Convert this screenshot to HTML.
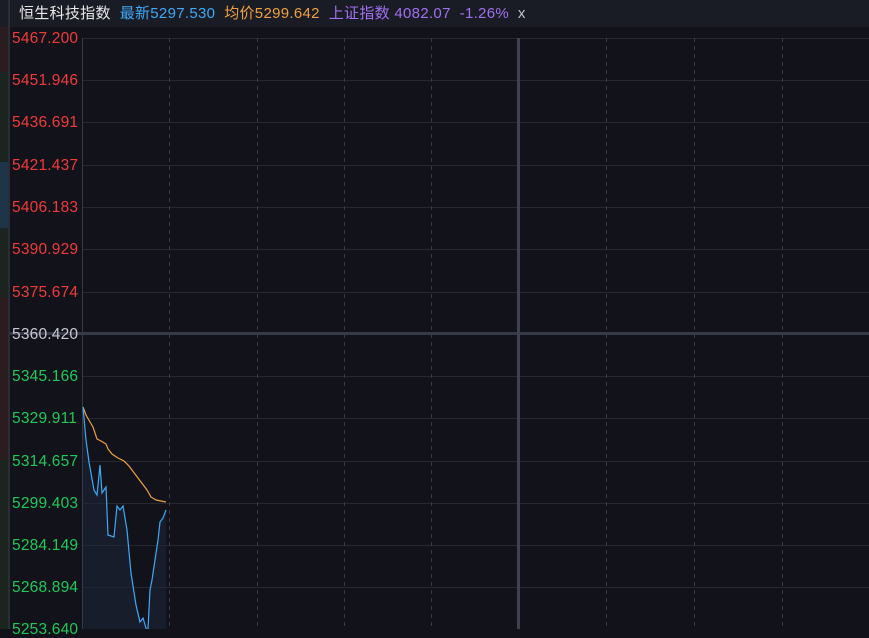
<!DOCTYPE html>
<html><head><meta charset="utf-8"><style>
html,body{margin:0;padding:0;width:869px;height:629px;overflow:hidden;background:#12131a;font-family:"Liberation Sans","Noto Sans CJK SC",sans-serif;}
.hdr{position:absolute;left:10px;top:0;width:859px;height:27px;background:#1a1c25;font-size:15px;line-height:27px;white-space:pre;letter-spacing:0.3px;}
.lbl{position:absolute;left:12px;font-size:15.5px;line-height:16px;letter-spacing:0.2px;}
</style></head><body>
<div style="position:absolute;left:0;top:0;width:9px;height:629px;background:#1b1d26"></div>
<div style="position:absolute;left:0;top:27px;width:8px;height:45px;background:#2a1c1f"></div>
<div style="position:absolute;left:0;top:72px;width:8px;height:90px;background:#1b241f"></div>
<div style="position:absolute;left:0;top:162px;width:8px;height:66px;background:#1e3448"></div>
<div style="position:absolute;left:0;top:228px;width:8px;height:70px;background:#1b241f"></div>
<div style="position:absolute;left:0;top:298px;width:8px;height:162px;background:#2a1c1f"></div>
<div style="position:absolute;left:0;top:460px;width:8px;height:169px;background:#1b241f"></div>
<div style="position:absolute;left:8px;top:0;width:2px;height:629px;background:#2a2d38"></div>
<div class="hdr">  <span style="color:#e8e8e8">恒生科技指数</span>  <span style="color:#3fa9f5">最新5297.530</span>  <span style="color:#f0a040">均价5299.642</span>  <span style="color:#a070f0">上证指数 4082.07  -1.26%</span>  <span style="color:#c0c0c8">x</span></div>
<svg style="position:absolute;left:0;top:0" width="869" height="629">
<g stroke="#262834" stroke-width="1">
<line x1="82" y1="38.5" x2="869" y2="38.5"/><line x1="82" y1="80.5" x2="869" y2="80.5"/><line x1="82" y1="122.5" x2="869" y2="122.5"/><line x1="82" y1="165.5" x2="869" y2="165.5"/><line x1="82" y1="207.5" x2="869" y2="207.5"/><line x1="82" y1="249.5" x2="869" y2="249.5"/><line x1="82" y1="292.5" x2="869" y2="292.5"/><line x1="82" y1="376.5" x2="869" y2="376.5"/><line x1="82" y1="418.5" x2="869" y2="418.5"/><line x1="82" y1="461.5" x2="869" y2="461.5"/><line x1="82" y1="503.5" x2="869" y2="503.5"/><line x1="82" y1="545.5" x2="869" y2="545.5"/><line x1="82" y1="587.5" x2="869" y2="587.5"/>
</g>
<line x1="10" y1="333.5" x2="869" y2="333.5" stroke="#363946" stroke-width="3"/>
<g stroke="#363946" stroke-width="1" stroke-dasharray="4,4">
<line x1="169.5" y1="38" x2="169.5" y2="629"/><line x1="257.5" y1="38" x2="257.5" y2="629"/><line x1="344.5" y1="38" x2="344.5" y2="629"/><line x1="431.5" y1="38" x2="431.5" y2="629"/><line x1="606.5" y1="38" x2="606.5" y2="629"/><line x1="694.5" y1="38" x2="694.5" y2="629"/><line x1="782.5" y1="38" x2="782.5" y2="629"/>
</g>
<line x1="82.5" y1="38" x2="82.5" y2="629" stroke="#363946"/>
<line x1="518.5" y1="38" x2="518.5" y2="629" stroke="#3e4250" stroke-width="3"/>
<polygon fill="#1a2535" opacity="0.6" points="83,407 86,440 89,462 94,490 97,495 100,465 102,493 106,487 108,535 114,537 117,506 120,510 123,506 127,530 131,573 136,605 140,622 143,618 146,628 148,629 166,629 166,510 163,518 160,522 158,540 155,560 152,580 150,590 148,629 83,629"/>
<polyline fill="none" stroke="#f0a040" stroke-width="1.2" points="83,407 86,415 90,422 93,427 97,439 101,441 106,444 108,449 112,454 118,458 124,461 129,466 135,474 141,482 147,490 151,497 156,500 166,502"/>
<polyline fill="none" stroke="#3fa9f5" stroke-width="1.2" points="83,407 86,440 89,462 94,490 97,495 100,465 102,493 106,487 108,535 114,537 117,506 120,510 123,506 127,530 131,573 136,605 140,622 143,618 146,628 147,630 148,629 150,590 152,580 155,560 158,540 160,522 163,518 166,510"/>
</svg>
<div class="lbl" style="top:31px;color:#f03a3a">5467.200</div>
<div class="lbl" style="top:73px;color:#f03a3a">5451.946</div>
<div class="lbl" style="top:115px;color:#f03a3a">5436.691</div>
<div class="lbl" style="top:158px;color:#f03a3a">5421.437</div>
<div class="lbl" style="top:200px;color:#f03a3a">5406.183</div>
<div class="lbl" style="top:242px;color:#f03a3a">5390.929</div>
<div class="lbl" style="top:285px;color:#f03a3a">5375.674</div>
<div class="lbl" style="top:327px;color:#c8c8d0">5360.420</div>
<div class="lbl" style="top:369px;color:#1ec85a">5345.166</div>
<div class="lbl" style="top:411px;color:#1ec85a">5329.911</div>
<div class="lbl" style="top:454px;color:#1ec85a">5314.657</div>
<div class="lbl" style="top:496px;color:#1ec85a">5299.403</div>
<div class="lbl" style="top:538px;color:#1ec85a">5284.149</div>
<div class="lbl" style="top:580px;color:#1ec85a">5268.894</div>
<div class="lbl" style="top:622px;color:#1ec85a">5253.640</div>
</body></html>
